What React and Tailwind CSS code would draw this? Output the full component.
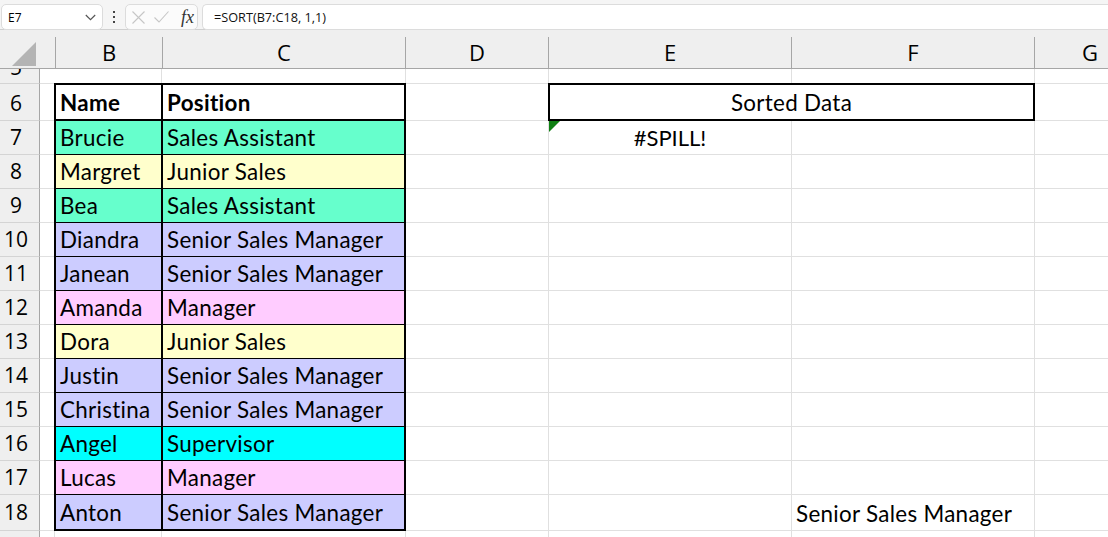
const DATA = [
  [7, "Brucie", "Sales Assistant", "bg-[#66ffcc]"],
  [8, "Margret", "Junior Sales", "bg-[#ffffcc]"],
  [9, "Bea", "Sales Assistant", "bg-[#66ffcc]"],
  [10, "Diandra", "Senior Sales Manager", "bg-[#ccccff]"],
  [11, "Janean", "Senior Sales Manager", "bg-[#ccccff]"],
  [12, "Amanda", "Manager", "bg-[#ffccff]"],
  [13, "Dora", "Junior Sales", "bg-[#ffffcc]"],
  [14, "Justin", "Senior Sales Manager", "bg-[#ccccff]"],
  [15, "Christina", "Senior Sales Manager", "bg-[#ccccff]"],
  [16, "Angel", "Supervisor", "bg-[#00ffff]"],
  [17, "Lucas", "Manager", "bg-[#ffccff]"],
  [18, "Anton", "Senior Sales Manager", "bg-[#ccccff]"],
];

const grid = "border-[#e0e0e0]";

function RowHead({ children, top = "" }) {
  return (
    <div className={`w-[40px] shrink-0 bg-[#efefef] border-r border-b border-r-[#a6a6a6] border-b-[#d4d4d4] flex items-center overflow-hidden tracking-normal ${top}`}>
      <span className="w-[32px] text-center text-[21px] font-['Open_Sans',sans-serif] text-black">{children}</span>
    </div>
  );
}

function ColHead({ w, label }) {
  return (
    <div className={`${w} shrink-0 flex items-center justify-center border-r border-[#a6a6a6] text-[22px] font-['Open_Sans',sans-serif] text-black`}>
      {label}
    </div>
  );
}

function Blank({ w, extra = "" }) {
  return <div className={`${w} shrink-0 border-r border-b ${grid} ${extra}`} />;
}

function Row({ n, name, pos, bg }) {
  const last = n === 18;
  const pad = last ? "pt-[2px]" : "";
  return (
    <div className={`flex ${last ? "h-[36px]" : "h-[34px]"}`}>
      <RowHead>{n}</RowHead>
      <div className={`w-[14px] shrink-0 border-b ${grid}`} />
      <div className={`w-[107px] shrink-0 ${bg} border-l-2 border-black flex items-center pl-[4px] ${pad} ${last ? "border-b-2" : "border-b"}`}>{name}</div>
      <div className={`w-[245px] shrink-0 ${bg} border-l-2 border-r-2 border-black flex items-center pl-[4px] ${pad} ${last ? "border-b-2" : "border-b"}`}>{pos}</div>
      <Blank w="w-[143px]" />
      <div className={`w-[243px] shrink-0 border-r border-b ${grid} relative flex items-center justify-center`}>
        {n === 7 && (
          <>
            <svg className="absolute left-0 top-0" width="11" height="11" viewBox="0 0 11 11">
              <path d="M0 0H11L0 11Z" fill="#0f7f12" />
            </svg>
            <span className="text-[22px] tracking-normal">#SPILL!</span>
          </>
        )}
      </div>
      <div className={`w-[243px] shrink-0 border-r border-b ${grid} flex items-center pl-[4px] whitespace-nowrap ${pad}`}>
        {last ? "Senior Sales Manager" : ""}
      </div>
      <div className={`flex-1 border-b ${grid}`} />
    </div>
  );
}

export default function App() {
  return (
    <div className="w-[1108px] h-[537px] overflow-hidden bg-white flex flex-col font-['Lato',sans-serif] text-[22.4px] tracking-[0.3px] text-black">
      {/* Formula bar */}
      <div className="h-[30px] shrink-0 bg-[#f5f5f5] border-b border-[#d0d0d0] flex items-stretch pt-[4px] pl-[1px] font-['Open_Sans',sans-serif] tracking-normal">
        <div className="w-[102px] mb-[-1px] bg-white border border-[#dcdcdc] rounded-[5px] flex items-center justify-between pl-[6px] pr-[6px] pt-[1px] text-[12px]">
          <span>E7</span>
          <svg width="11" height="7" viewBox="0 0 11 7" fill="none" stroke="#555" strokeWidth="1.2"><path d="M0.8 1L5.5 5.6L10.2 1" /></svg>
        </div>
        <div className="w-[22px] flex flex-col items-center justify-center gap-[3px]">
          <span className="w-[2px] h-[2px] bg-[#444]" />
          <span className="w-[2px] h-[2px] bg-[#444]" />
          <span className="w-[2px] h-[2px] bg-[#444]" />
        </div>
        <div className="w-[73px] mb-[-1px] bg-[#fbfbfb] border border-[#dcdcdc] rounded-[5px] flex items-center pl-[6px]">
          <svg width="13" height="13" viewBox="0 0 13 13" stroke="#c6c6c6" strokeWidth="1.1" fill="none"><path d="M0.5 0.5L12.5 12.5M12.5 0.5L0.5 12.5" /></svg>
          <svg className="ml-[9px]" width="15" height="12" viewBox="0 0 15 12" stroke="#c6c6c6" strokeWidth="1.1" fill="none"><path d="M0.5 6.5L5 11L14.5 0.5" /></svg>
          <span className="ml-[12px] font-['Liberation_Serif',serif] italic text-[18px] leading-none text-[#333]">fx</span>
        </div>
        <div className="w-[4px]" />
        <div className="flex-1 mb-[-1px] bg-white border border-r-0 border-[#dcdcdc] rounded-l-[5px] flex items-center pl-[11px] pt-[1px] text-[12.7px] text-[#111]">
          =SORT(B7:C18, 1,1)
        </div>
      </div>

      {/* Column headers */}
      <div className="h-[39px] shrink-0 bg-[#efefef] border-b border-[#a6a6a6] flex pt-[7px] tracking-normal">
        <div className="w-[40px] shrink-0 relative">
          <svg className="absolute left-[12px] top-[5px]" width="24" height="24" viewBox="0 0 24 24"><path d="M24 0V24H0Z" fill="#b4b4b4" /></svg>
        </div>
        <ColHead w="w-[16px]" label="" />
        <ColHead w="w-[107px]" label="B" />
        <ColHead w="w-[243px]" label="C" />
        <ColHead w="w-[143px]" label="D" />
        <ColHead w="w-[243px]" label="E" />
        <ColHead w="w-[243px]" label="F" />
        <div className="w-[110px] shrink-0 flex items-center justify-center text-[22px] font-['Open_Sans',sans-serif]">G</div>
      </div>

      {/* Row 5, partly scrolled away */}
      <div className="h-[15px] shrink-0 flex tracking-normal">
        <div className="w-[40px] shrink-0 bg-[#efefef] border-r border-b border-r-[#a6a6a6] border-b-[#d4d4d4] overflow-hidden font-['Open_Sans',sans-serif] text-[21px]">
          <div className="w-[32px] text-center leading-[30px] mt-[-17px]">5</div>
        </div>
        <div className={`w-[15px] shrink-0 border-b ${grid}`} />
        <Blank w="w-[107px]" />
        <Blank w="w-[244px]" />
        <Blank w="w-[143px]" />
        <Blank w="w-[243px]" />
        <Blank w="w-[243px]" />
        <div className={`flex-1 border-b ${grid}`} />
      </div>

      {/* Row 6, headings */}
      <div className="h-[37px] shrink-0 flex">
        <RowHead top="pt-[3px]">6</RowHead>
        <div className={`w-[14px] shrink-0 border-b ${grid}`} />
        <div className="w-[107px] shrink-0 -mt-px border-l-2 border-t-2 border-b-2 border-black flex items-center pl-[4px] pt-[2px] font-bold">Name</div>
        <div className="w-[245px] shrink-0 -mt-px border-l-2 border-r-2 border-t-2 border-b-2 border-black flex items-center pl-[4px] pt-[2px] font-bold">Position</div>
        <div className={`w-[142px] shrink-0 border-b ${grid}`} />
        <div className="w-[487px] shrink-0 -mt-px border-2 border-black flex items-center justify-center pt-[2px]">Sorted Data</div>
        <div className={`flex-1 border-b ${grid}`} />
      </div>

      {/* Rows 7 to 18 */}
      {DATA.map(([n, name, pos, bg]) => (
        <Row key={n} n={n} name={name} pos={pos} bg={bg} />
      ))}

      {/* Row 19, partly visible */}
      <div className="flex-1 flex">
        <div className="w-[40px] shrink-0 bg-[#efefef] border-r border-r-[#a6a6a6]" />
        <div className={`w-[15px] shrink-0 border-r ${grid}`} />
        <div className={`w-[107px] shrink-0 border-r ${grid}`} />
        <div className={`w-[244px] shrink-0 border-r ${grid}`} />
        <div className={`w-[143px] shrink-0 border-r ${grid}`} />
        <div className={`w-[243px] shrink-0 border-r ${grid}`} />
        <div className={`w-[243px] shrink-0 border-r ${grid}`} />
      </div>
    </div>
  );
}
